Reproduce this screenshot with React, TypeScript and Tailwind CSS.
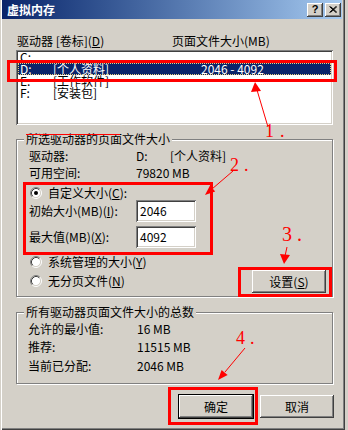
import { ReactNode } from "react";

const raised =
  "shadow-[inset_-1px_-1px_#404040,inset_1px_1px_#ffffff,inset_-2px_-2px_#808080,inset_2px_2px_#d4d0c8]";
const sunken =
  "shadow-[inset_1px_1px_#808080,inset_-1px_-1px_#ffffff,inset_2px_2px_#404040,inset_-2px_-2px_#d4d0c8]";
const etched = "border border-[#808080] shadow-[inset_1px_1px_#ffffff,1px_1px_#ffffff]";

const Radio = ({ checked }: { checked?: boolean }) => (
  <svg width="12" height="12" viewBox="0 0 12 12" className="shrink-0">
    <circle cx="6" cy="6" r="4.5" fill="#fff" />
    <path d="M2.11 9.89 A5.5 5.5 0 0 1 9.89 2.11" stroke="#808080" fill="none" />
    <path d="M9.89 2.11 A5.5 5.5 0 0 1 2.11 9.89" stroke="#fff" fill="none" />
    <path d="M2.82 9.18 A4.5 4.5 0 0 1 9.18 2.82" stroke="#404040" fill="none" />
    <path d="M9.18 2.82 A4.5 4.5 0 0 1 2.82 9.18" stroke="#d4d0c8" fill="none" />
    {checked && <circle cx="6" cy="6" r="2" fill="#000" />}
  </svg>
);

const Group = ({ title, className, children }: { title: string; className: string; children: ReactNode }) => (
  <div className={`relative w-[317px] ${etched} ${className}`}>
    <span className="absolute -top-[7px] left-[7px] bg-[#d4d0c8] px-[2px] leading-[12px]">{title}</span>
    {children}
  </div>
);

const Button = ({ label, isDefault }: { label: ReactNode; isDefault?: boolean }) => (
  <div
    className={`w-[74px] h-[23px] flex items-center justify-center leading-[12px] ${raised} ${
      isDefault ? "outline outline-1 outline-black" : ""
    }`}
  >
    {label}
  </div>
);

const drives = [
  { letter: "C:", label: "", size: "" },
  { letter: "D:", label: "[个人资料]", size: "2046 - 4092", selected: true },
  { letter: "E:", label: "[工作软件]", size: "" },
  { letter: "F:", label: "[安装包]", size: "" },
];

export default function App() {
  return (
    <div className="relative w-[348px] h-[430px] overflow-hidden bg-[#d4d0c8] text-[12px] text-black font-['Noto_Sans_CJK_SC',sans-serif]">
      <div className="w-[345px] h-[430px] flex flex-col shadow-[inset_1px_0_#d4d0c8,inset_2px_0_#ffffff,inset_-1px_-1px_#404040,inset_-2px_-2px_#808080]">
        {/* title bar */}
        <div className="ml-[2px] w-[340px] h-[19px] flex items-center justify-between pl-[5px] pr-[1px] bg-gradient-to-r from-[#0a246a] to-[#a6caf0]">
          <span className="text-white font-bold text-[12px] leading-[12px]">虚拟内存</span>
          <div className="flex gap-[2px]">
            <div className={`w-[16px] h-[14px] bg-[#d4d0c8] flex items-center justify-center ${raised}`}>
              <span className="font-['Liberation_Sans',sans-serif] font-bold text-[11px] leading-[11px]">?</span>
            </div>
            <div className={`w-[16px] h-[14px] bg-[#d4d0c8] flex items-center justify-center ${raised}`}>
              <svg width="8" height="7" viewBox="0 0 8 7">
                <path d="M0.5 0.5 L7 6.5 M1.5 0.5 L8 6.5 M7 0.5 L0.5 6.5 M8 0.5 L1.5 6.5" stroke="#000" strokeWidth="1" />
              </svg>
            </div>
          </div>
        </div>

        <div className="pl-[16px] flex flex-col">
          {/* header */}
          <div className="mt-[16px] h-[12px] leading-[12px] flex">
            <span className="w-[156px] pl-px">驱动器 [卷标](<u>D</u>)</span>
            <span>页面文件大小(MB)</span>
          </div>

          {/* list */}
          <div className={`mt-[3px] w-[317px] h-[75px] bg-white p-[2px] ${sunken}`}>
            <div className="-mt-px flex flex-col">
              {drives.map((d) => (
                <div
                  key={d.letter}
                  className={`h-[12px] leading-[12px] flex ${
                    d.selected
                      ? "bg-[#0a246a] text-white outline outline-1 outline-dotted outline-[#e8d080] -outline-offset-1"
                      : ""
                  }`}
                >
                  <span className="w-[35px] pl-[2px]">{d.letter}</span>
                  <span className="w-[148px]">{d.label}</span>
                  <span>{d.size}</span>
                </div>
              ))}
            </div>
          </div>

          {/* selected drive */}
          <Group title="所选驱动器的页面文件大小" className="mt-[14px] h-[158px]">
            <div className="flex flex-col pt-[10px] pl-[12px]">
              <div className="h-[12px] leading-[12px] flex">
                <span className="w-[107px]">驱动器:</span>
                <span className="w-[34px]">D:</span>
                <span>[个人资料]</span>
              </div>
              <div className="mt-[5px] h-[12px] leading-[12px] flex">
                <span className="w-[107px]">可用空间:</span>
                <span>79820 MB</span>
              </div>
              <div className="mt-[8px] h-[12px] leading-[12px] flex items-center gap-[6px] pl-px">
                <Radio checked />
                <span>自定义大小(<u>C</u>):</span>
              </div>
              <div className="mt-px flex items-center">
                <span className="w-[107px] leading-[12px]">初始大小(MB)(<u>I</u>):</span>
                <div className={`w-[60px] h-[22px] bg-white pl-[4px] flex items-center leading-[12px] ${sunken}`}>2046</div>
              </div>
              <div className="mt-[4px] flex items-center">
                <span className="w-[107px] leading-[12px]">最大值(MB)(<u>X</u>):</span>
                <div className={`w-[60px] h-[22px] bg-white pl-[4px] flex items-center leading-[12px] ${sunken}`}>4092</div>
              </div>
              <div className="flex items-start justify-between pr-[6px]">
                <div className="flex flex-col pl-px">
                  <div className="mt-[8px] h-[12px] leading-[12px] flex items-center gap-[6px]">
                    <Radio />
                    <span>系统管理的大小(<u>Y</u>)</span>
                  </div>
                  <div className="mt-[7px] h-[12px] leading-[12px] flex items-center gap-[6px]">
                    <Radio />
                    <span>无分页文件(<u>N</u>)</span>
                  </div>
                </div>
                <div className="mt-[22px]">
                  <Button label={<span>设置(<u>S</u>)</span>} />
                </div>
              </div>
            </div>
          </Group>

          {/* totals */}
          <Group title="所有驱动器页面文件大小的总数" className="mt-[15px] h-[72px]">
            <div className="flex flex-col pt-[10px] pl-[11px]">
              <div className="h-[12px] leading-[12px] flex">
                <span className="w-[109px]">允许的最小值:</span>
                <span>16 MB</span>
              </div>
              <div className="mt-[6px] h-[12px] leading-[12px] flex">
                <span className="w-[109px]">推荐:</span>
                <span>11515 MB</span>
              </div>
              <div className="mt-[7px] h-[12px] leading-[12px] flex">
                <span className="w-[109px]">当前已分配:</span>
                <span>2046 MB</span>
              </div>
            </div>
          </Group>

          <div className="mt-[11px] w-[318px] flex justify-end gap-[7px]">
            <Button label="确定" isDefault />
            <Button label="取消" />
          </div>
        </div>
      </div>

      {/* red annotations */}
      <div className="absolute left-[7px] top-[60px] w-[330px] h-[22px] border-[3px] border-[#ff0000]" />
      <div className="absolute left-[23px] top-[182px] w-[190px] h-[73px] border-[3px] border-[#ff0000]" />
      <div className="absolute left-[238px] top-[267px] w-[94px] h-[30px] border-[3px] border-[#ff0000]" />
      <div className="absolute left-[168px] top-[387px] w-[90px] h-[38px] border-[3px] border-[#ff0000]" />

      <span className="absolute left-[265px] top-[122px] text-[18px] leading-[18px] tracking-[6px] text-[#ff0000] font-['Liberation_Serif',serif]">1.</span>
      <span className="absolute left-[230px] top-[156px] text-[18px] leading-[18px] tracking-[5px] text-[#ff0000] font-['Liberation_Serif',serif]">2.</span>
      <span className="absolute left-[282px] top-[224px] text-[20px] leading-[20px] tracking-[5px] text-[#ff0000] font-['Liberation_Serif',serif]">3.</span>
      <span className="absolute left-[236px] top-[329px] text-[18px] leading-[18px] tracking-[5px] text-[#ff0000] font-['Liberation_Serif',serif]">4.</span>

      <svg className="absolute inset-0 pointer-events-none" width="348" height="430" viewBox="0 0 348 430">
        <g stroke="#ff0000" strokeWidth="1" fill="none">
          <path d="M268 127 L257 90" />
          <path d="M233 171 L212 189" />
          <path d="M287 247 L285 256" />
          <path d="M245 348 L225 372" />
          <path d="M26 134.5 L120 134.5" />
        </g>
        <g fill="#ff0000">
          <polygon points="255,82 251,92 261,91" />
          <polygon points="205,195 215.2,191.5 210,185.5" />
          <polygon points="284,264 280,254 290,255" />
          <polygon points="218,380 227.6,375.1 221.6,369.9" />
        </g>
      </svg>
    </div>
  );
}
